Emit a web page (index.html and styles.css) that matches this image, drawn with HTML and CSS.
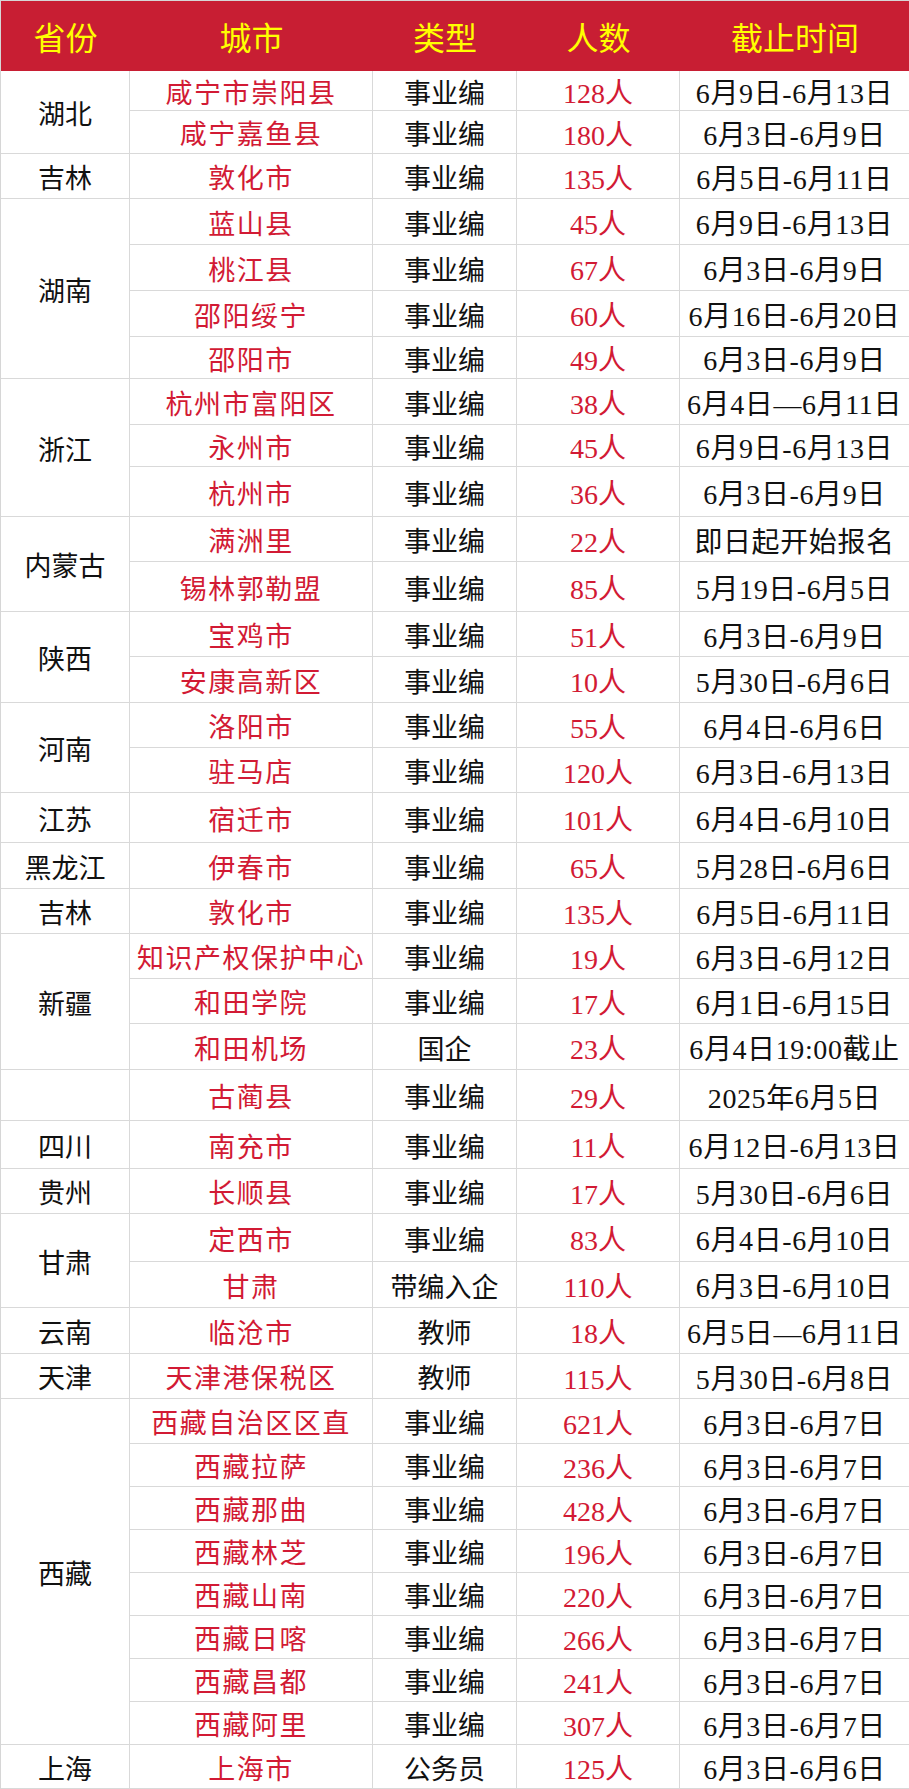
FILE: index.html
```html
<!DOCTYPE html>
<html lang="zh-CN">
<head>
<meta charset="utf-8">
<title>事业编招聘汇总</title>
<link rel="stylesheet" href="styles.css">
</head>
<body>
<table class="grid">
  <colgroup>
    <col class="c-prov"><col class="c-city"><col class="c-type"><col class="c-num"><col class="c-date">
  </colgroup>
  <thead>
    <tr class="head"><th>省份</th><th>城市</th><th>类型</th><th>人数</th><th>截止时间</th></tr>
  </thead>
  <tbody>
    <tr class="h40"><td class="prov" rowspan="2">湖北</td><td class="city">咸宁市崇阳县</td><td>事业编</td><td class="num">128人</td><td class="date">6月9日-6月13日</td></tr>
    <tr class="h43"><td class="city">咸宁嘉鱼县</td><td>事业编</td><td class="num">180人</td><td class="date">6月3日-6月9日</td></tr>
    <tr class="h45"><td class="prov">吉林</td><td class="city">敦化市</td><td>事业编</td><td class="num">135人</td><td class="date">6月5日-6月11日</td></tr>
    <tr class="h46"><td class="prov" rowspan="4">湖南</td><td class="city">蓝山县</td><td>事业编</td><td class="num">45人</td><td class="date">6月9日-6月13日</td></tr>
    <tr class="h46"><td class="city">桃江县</td><td>事业编</td><td class="num">67人</td><td class="date">6月3日-6月9日</td></tr>
    <tr class="h46"><td class="city">邵阳绥宁</td><td>事业编</td><td class="num">60人</td><td class="date">6月16日-6月20日</td></tr>
    <tr class="h42"><td class="city">邵阳市</td><td>事业编</td><td class="num">49人</td><td class="date">6月3日-6月9日</td></tr>
    <tr class="h46"><td class="prov" rowspan="3">浙江</td><td class="city">杭州市富阳区</td><td>事业编</td><td class="num">38人</td><td class="date">6月4日—6月11日</td></tr>
    <tr class="h42"><td class="city">永州市</td><td>事业编</td><td class="num">45人</td><td class="date">6月9日-6月13日</td></tr>
    <tr class="h50"><td class="city">杭州市</td><td>事业编</td><td class="num">36人</td><td class="date">6月3日-6月9日</td></tr>
    <tr class="h45"><td class="prov" rowspan="2">内蒙古</td><td class="city">满洲里</td><td>事业编</td><td class="num">22人</td><td class="date">即日起开始报名</td></tr>
    <tr class="h50"><td class="city">锡林郭勒盟</td><td>事业编</td><td class="num">85人</td><td class="date">5月19日-6月5日</td></tr>
    <tr class="h45"><td class="prov" rowspan="2">陕西</td><td class="city">宝鸡市</td><td>事业编</td><td class="num">51人</td><td class="date">6月3日-6月9日</td></tr>
    <tr class="h46"><td class="city">安康高新区</td><td>事业编</td><td class="num">10人</td><td class="date">5月30日-6月6日</td></tr>
    <tr class="h45"><td class="prov" rowspan="2">河南</td><td class="city">洛阳市</td><td>事业编</td><td class="num">55人</td><td class="date">6月4日-6月6日</td></tr>
    <tr class="h45"><td class="city">驻马店</td><td>事业编</td><td class="num">120人</td><td class="date">6月3日-6月13日</td></tr>
    <tr class="h50"><td class="prov">江苏</td><td class="city">宿迁市</td><td>事业编</td><td class="num">101人</td><td class="date">6月4日-6月10日</td></tr>
    <tr class="h46"><td class="prov">黑龙江</td><td class="city">伊春市</td><td>事业编</td><td class="num">65人</td><td class="date">5月28日-6月6日</td></tr>
    <tr class="h45"><td class="prov">吉林</td><td class="city">敦化市</td><td>事业编</td><td class="num">135人</td><td class="date">6月5日-6月11日</td></tr>
    <tr class="h45"><td class="prov" rowspan="3">新疆</td><td class="city">知识产权保护中心</td><td>事业编</td><td class="num">19人</td><td class="date">6月3日-6月12日</td></tr>
    <tr class="h45"><td class="city">和田学院</td><td>事业编</td><td class="num">17人</td><td class="date">6月1日-6月15日</td></tr>
    <tr class="h46"><td class="city">和田机场</td><td>国企</td><td class="num">23人</td><td class="date">6月4日19:00截止</td></tr>
    <tr class="h51"><td class="prov"></td><td class="city">古蔺县</td><td>事业编</td><td class="num">29人</td><td class="date">2025年6月5日</td></tr>
    <tr class="h48"><td class="prov">四川</td><td class="city">南充市</td><td>事业编</td><td class="num">11人</td><td class="date">6月12日-6月13日</td></tr>
    <tr class="h45"><td class="prov">贵州</td><td class="city">长顺县</td><td>事业编</td><td class="num">17人</td><td class="date">5月30日-6月6日</td></tr>
    <tr class="h48"><td class="prov" rowspan="2">甘肃</td><td class="city">定西市</td><td>事业编</td><td class="num">83人</td><td class="date">6月4日-6月10日</td></tr>
    <tr class="h46"><td class="city">甘肃</td><td>带编入企</td><td class="num">110人</td><td class="date">6月3日-6月10日</td></tr>
    <tr class="h46"><td class="prov">云南</td><td class="city">临沧市</td><td>教师</td><td class="num">18人</td><td class="date">6月5日—6月11日</td></tr>
    <tr class="h45"><td class="prov">天津</td><td class="city">天津港保税区</td><td>教师</td><td class="num">115人</td><td class="date">5月30日-6月8日</td></tr>
    <tr class="h45"><td class="prov" rowspan="8">西藏</td><td class="city">西藏自治区区直</td><td>事业编</td><td class="num">621人</td><td class="date">6月3日-6月7日</td></tr>
    <tr class="h43"><td class="city">西藏拉萨</td><td>事业编</td><td class="num">236人</td><td class="date">6月3日-6月7日</td></tr>
    <tr class="h43"><td class="city">西藏那曲</td><td>事业编</td><td class="num">428人</td><td class="date">6月3日-6月7日</td></tr>
    <tr class="h43"><td class="city">西藏林芝</td><td>事业编</td><td class="num">196人</td><td class="date">6月3日-6月7日</td></tr>
    <tr class="h43"><td class="city">西藏山南</td><td>事业编</td><td class="num">220人</td><td class="date">6月3日-6月7日</td></tr>
    <tr class="h43"><td class="city">西藏日喀</td><td>事业编</td><td class="num">266人</td><td class="date">6月3日-6月7日</td></tr>
    <tr class="h43"><td class="city">西藏昌都</td><td>事业编</td><td class="num">241人</td><td class="date">6月3日-6月7日</td></tr>
    <tr class="h43"><td class="city">西藏阿里</td><td>事业编</td><td class="num">307人</td><td class="date">6月3日-6月7日</td></tr>
    <tr class="h44"><td class="prov">上海</td><td class="city">上海市</td><td>公务员</td><td class="num">125人</td><td class="date">6月3日-6月6日</td></tr>
  </tbody>
</table>
</body>
</html>
```

FILE: styles.css
```css
html, body {
  margin: 0;
  padding: 0;
  background: #ffffff;
}

.grid {
  width: 909px;
  table-layout: fixed;
  border-collapse: separate;
  border-spacing: 0;
  border-top: 1px solid #d6d6d6;
  border-left: 1px solid #d6d6d6;
  font-family: "Liberation Serif", "Noto Sans CJK SC", serif;
  font-size: 27px;
  color: #111111;
}

.c-prov { width: 129px; }
.c-city { width: 243px; }
.c-type { width: 144px; }
.c-num  { width: 163px; }
.c-date { width: 230px; }

.head th {
  height: 70px;
  padding: 0;
  background: #c81e33;
  color: #ffff00;
  font-family: "Noto Sans CJK SC", sans-serif;
  font-size: 32px;
  font-weight: 400;
  text-align: center;
  vertical-align: middle;
  line-height: 1;
  border: 0;
}

td {
  padding: 7px 0 0 0;
  text-align: center;
  vertical-align: middle;
  line-height: 1;
  white-space: nowrap;
  border-right: 1px solid #d9d9d9;
  border-bottom: 1px solid #d9d9d9;
}

.city {
  color: #d21a34;
  letter-spacing: 1.5px;
}

.num {
  color: #d21a34;
  font-size: 28px;
}

.date {
  font-size: 28px;
  letter-spacing: 0.6px;
}

.h40 { height: 40px; }
.h42 { height: 42px; }
.h43 { height: 43px; }
.h44 { height: 44px; }
.h45 { height: 45px; }
.h46 { height: 46px; }
.h48 { height: 48px; }
.h50 { height: 50px; }
.h51 { height: 51px; }
```
